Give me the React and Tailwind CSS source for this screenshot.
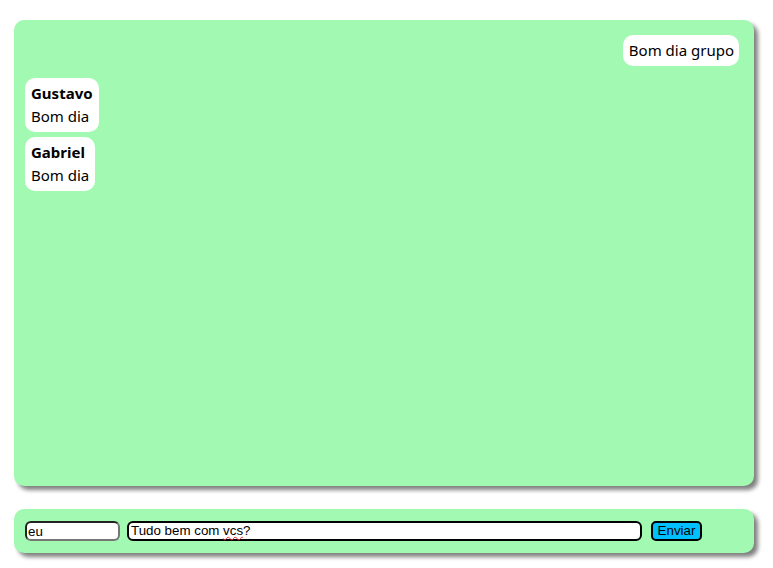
import React from "react";

export default function App() {
  const font = { fontFamily: '"Noto Sans", "Open Sans", sans-serif' };
  const arial = { fontFamily: '"Liberation Sans", Arial, sans-serif' };
  return (
    <div className="w-[773px] h-[568px] bg-white overflow-hidden">
      <div className="pt-[20px] pl-[14px]">
        <div
          className="w-[740px] h-[466px] rounded-[10px] bg-[#a2f9b2] shadow-[4px_4px_4px_#808080] pt-[15px] pl-[11px] pr-[15px] flex flex-col text-[15px] leading-[23px] text-black"
          style={font}
        >
          <div className="flex justify-end">
            <div className="bg-white rounded-[10px] pl-[6px] pr-[5px] py-[4px]">Bom dia grupo</div>
          </div>
          <div className="mt-[12px] flex flex-col items-start gap-[5px]">
            <div className="bg-white rounded-[10px] px-[6px] py-[4px]">
              <div className="font-bold">Gustavo</div>
              <div>Bom dia</div>
            </div>
            <div className="bg-white rounded-[10px] px-[6px] py-[4px]">
              <div className="font-bold">Gabriel</div>
              <div>Bom dia</div>
            </div>
          </div>
        </div>
        <div className="mt-[23px] w-[740px] h-[44px] rounded-[10px] bg-[#a2f9b2] shadow-[4px_4px_4px_#808080] pl-[11px] flex items-center">
          <input
            defaultValue="eu"
            className="w-[95px] h-[20px] rounded-[6px] border-2 border-t-[#222] border-l-[#222] border-b-[#767676] border-r-[#767676] bg-white px-[1px] text-[13.33px] text-black outline-none"
            style={arial}
          />
          <div
            className="ml-[7px] w-[515px] h-[20px] rounded-[6px] border-2 border-black bg-white px-[2px] text-[13.33px] leading-[16px] text-black flex items-center whitespace-pre"
            style={arial}
          >
            <span>Tudo bem com </span>
            <span className="underline decoration-wavy decoration-red-500 decoration-1 underline-offset-[1px]">vcs</span>
            <span>?</span>
          </div>
          <button
            className="ml-[9px] w-[51px] h-[20px] rounded-[5px] border-2 border-black bg-[#00bfff] text-[13.33px] leading-[14px] text-black flex items-center justify-center"
            style={arial}
          >
            Enviar
          </button>
        </div>
      </div>
    </div>
  );
}
